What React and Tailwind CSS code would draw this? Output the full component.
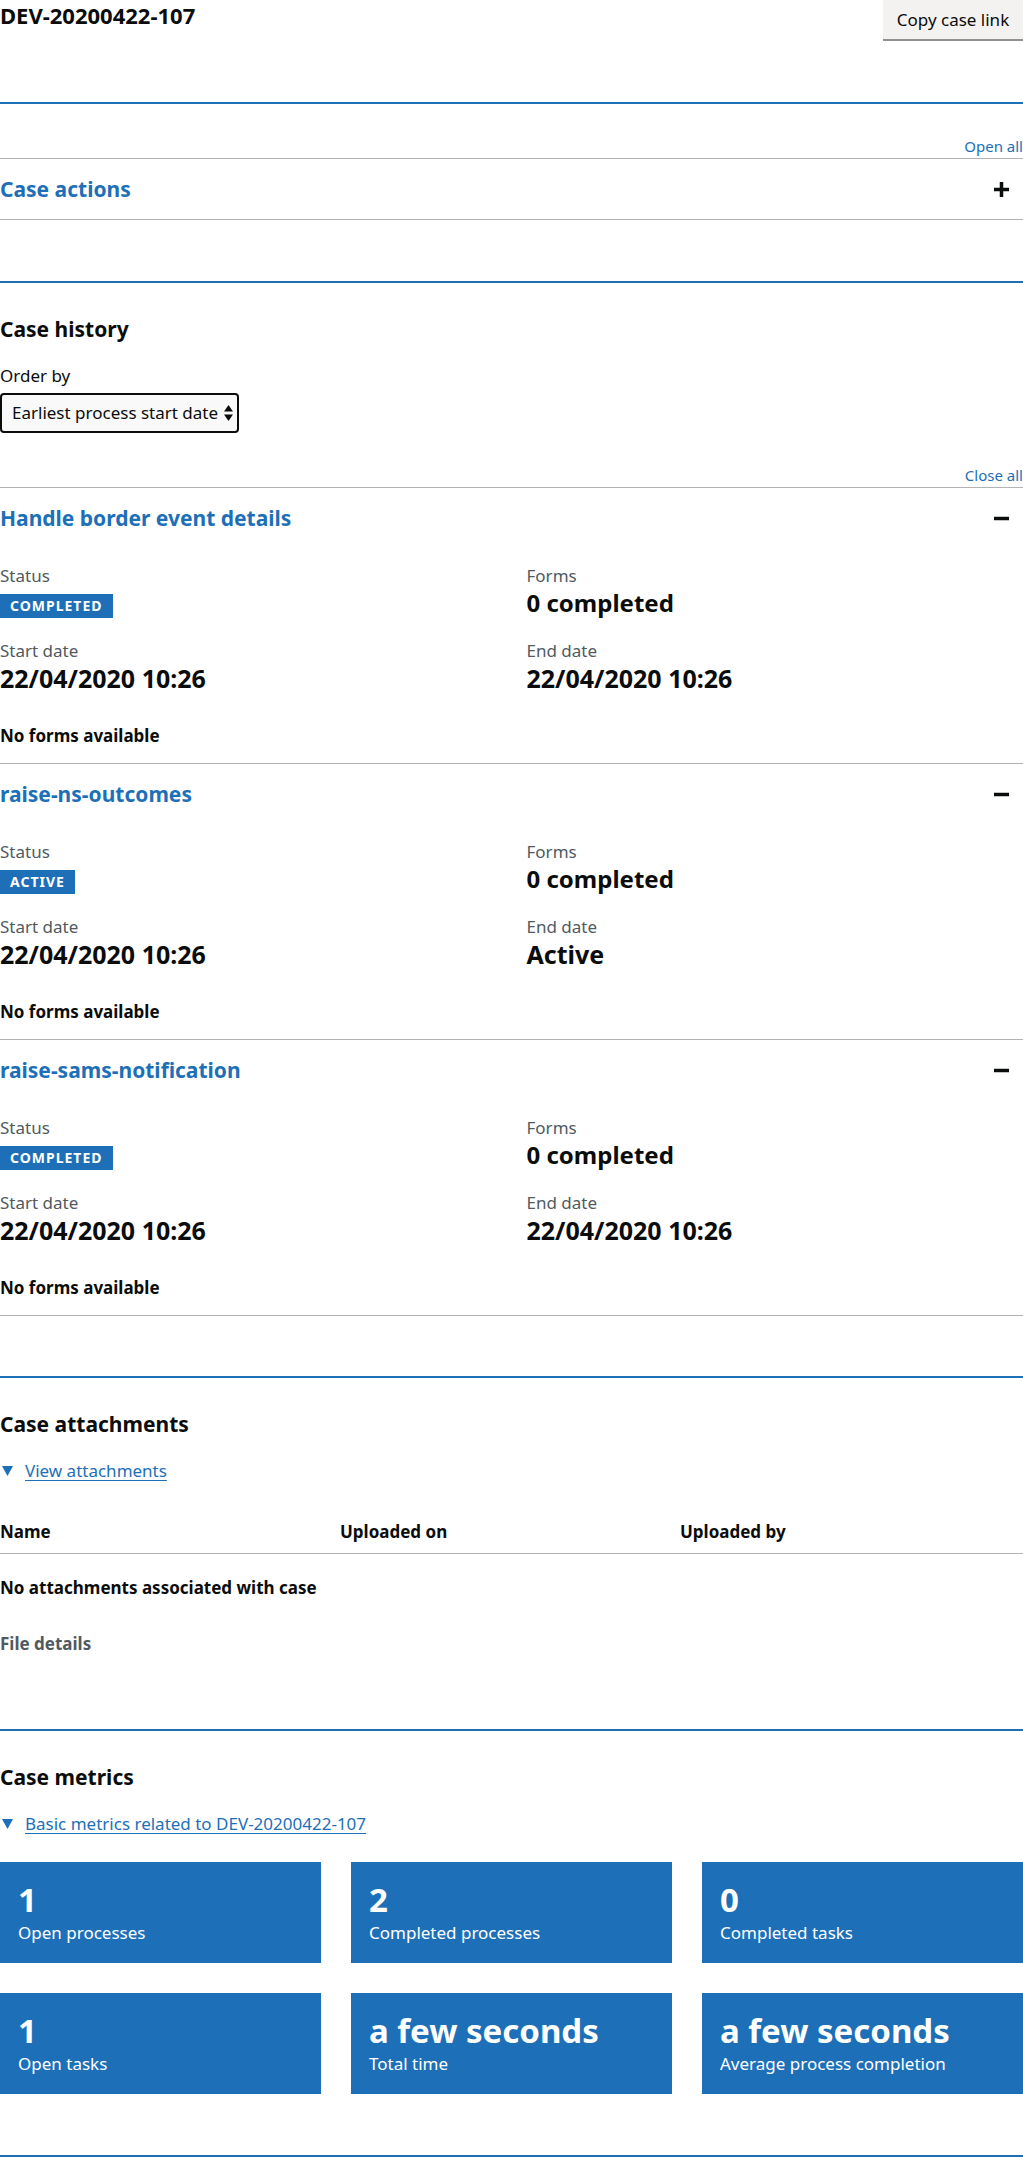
import { useState } from 'react'

const processes = [
  { id: 1, title: 'Handle border event details', status: 'COMPLETED', end: '22/04/2020 10:26' },
  { id: 2, title: 'raise-ns-outcomes', status: 'ACTIVE', end: 'Active' },
  { id: 3, title: 'raise-sams-notification', status: 'COMPLETED', end: '22/04/2020 10:26' },
]

const metrics = [
  { value: '1', label: 'Open processes' },
  { value: '2', label: 'Completed processes' },
  { value: '0', label: 'Completed tasks' },
  { value: '1', label: 'Open tasks' },
  { value: 'a few seconds', label: 'Total time' },
  { value: 'a few seconds', label: 'Average process completion' },
]

function PlusIcon() {
  return (
    <svg width="15" height="15" viewBox="0 0 15 15" aria-hidden="true">
      <path d="M7.5 0v15M0 7.5h15" stroke="#0b0c0c" strokeWidth="3.5" />
    </svg>
  )
}

function MinusIcon() {
  return (
    <svg width="15" height="15" viewBox="0 0 15 15" aria-hidden="true">
      <path d="M0 7.5h15" stroke="#0b0c0c" strokeWidth="3.5" />
    </svg>
  )
}

function DownTriangle() {
  return (
    <svg width="11" height="10" viewBox="0 0 11 10" aria-hidden="true">
      <polygon points="0,0 11,0 5.5,10" fill="#1d70b8" />
    </svg>
  )
}

function SectionBreak() {
  return <div className="h-[2px] bg-[#1d70b8]" />
}

function Process({ title, status, end }) {
  return (
    <section className="border-t border-[#b1b4b6] pb-[15px]">
      <div className="flex items-center justify-between pt-[16px] pr-[14px]">
        <h3 className="text-[21px] font-bold leading-[28px] text-[#1d70b8]">{title}</h3>
        <MinusIcon />
      </div>
      <dl className="mt-[32px] grid grid-cols-2 gap-x-[30px] gap-y-[21px]">
        <div>
          <dt className="text-[17px] leading-[24px] text-[#505a5f]">Status</dt>
          <dd className="h-[30px] pt-[5px]">
            <span className="inline-block h-[24px] bg-[#1d70b8] px-[10px] text-[14px] font-bold leading-[24px] tracking-[1px] text-white">
              {status}
            </span>
          </dd>
        </div>
        <div>
          <dt className="text-[17px] leading-[24px] text-[#505a5f]">Forms</dt>
          <dd className="text-[24px] font-bold leading-[30px]">0 completed</dd>
        </div>
        <div>
          <dt className="text-[17px] leading-[24px] text-[#505a5f]">Start date</dt>
          <dd className="text-[25px] font-bold leading-[30px]">22/04/2020 10:26</dd>
        </div>
        <div>
          <dt className="text-[17px] leading-[24px] text-[#505a5f]">End date</dt>
          <dd className="text-[25px] font-bold leading-[30px]">{end}</dd>
        </div>
      </dl>
      <p className="mt-[31px] text-[17px] font-bold leading-[24px]">No forms available</p>
    </section>
  )
}

export default function App() {
  const [order, setOrder] = useState('earliest')

  return (
    <div className="min-h-screen bg-white font-['Noto_Sans',sans-serif] text-[#0b0c0c]">
      <header className="flex items-start justify-between">
        <h1 className="text-[22px] font-bold leading-[30px]">DEV-20200422-107</h1>
        <button
          type="button"
          className="flex h-[41px] w-[140px] items-center justify-center border-b-2 border-[#929191] bg-[#f3f2f1] text-[17px] leading-[24px]"
        >
          Copy case link
        </button>
      </header>

      <div className="mt-[61px]">
        <SectionBreak />
      </div>

      {/* Case actions accordion, collapsed */}
      <div className="mt-[32px] text-right text-[15px] leading-[20px] text-[#1d70b8]">Open all</div>
      <div className="mt-[2px] flex h-[62px] items-center justify-between border-y border-[#b1b4b6] pr-[14px]">
        <h2 className="text-[21px] font-bold leading-[28px] text-[#1d70b8]">Case actions</h2>
        <PlusIcon />
      </div>

      <div className="mt-[61px]">
        <SectionBreak />
      </div>

      <h2 className="mt-[32px] text-[21px] font-bold leading-[28px]">Case history</h2>
      <label htmlFor="order" className="mt-[21px] block text-[17px] leading-[24px]">
        Order by
      </label>
      <div className="relative mt-[5px] w-[239px]">
        <select
          id="order"
          value={order}
          onChange={(e) => setOrder(e.target.value)}
          className="h-[40px] w-full appearance-none rounded-[4px] border-2 border-[#0b0c0c] bg-[#f9f9f9] pl-[10px] text-[17px] leading-[24px]"
        >
          <option value="earliest">Earliest process start date</option>
          <option value="latest">Latest process start date</option>
        </select>
        <svg
          className="pointer-events-none absolute right-[6px] top-[12px]"
          width="9"
          height="16"
          viewBox="0 0 9 16"
          aria-hidden="true"
        >
          <polygon points="4.5,0 9,6.5 0,6.5" fill="#0b0c0c" />
          <polygon points="0,9.5 9,9.5 4.5,16" fill="#0b0c0c" />
        </svg>
      </div>

      <div className="mt-[32px] text-right text-[15px] leading-[20px] text-[#1d70b8]">Close all</div>
      <div className="mt-[2px] border-b border-[#b1b4b6]">
        {processes.map((p) => (
          <Process key={p.id} title={p.title} status={p.status} end={p.end} />
        ))}
      </div>

      <div className="mt-[60px]">
        <SectionBreak />
      </div>

      <h2 className="mt-[32px] text-[21px] font-bold leading-[28px]">Case attachments</h2>
      <div className="mt-[21px] flex items-center gap-[12px] pl-[2px] text-[17px] leading-[24px]">
        <DownTriangle />
        <span className="text-[#1d70b8] underline underline-offset-[3px]">View attachments</span>
      </div>
      <div className="mt-[37px] grid grid-cols-[340px_340px_1fr] border-b border-[#b1b4b6] pb-[9px] text-[17px] font-bold leading-[24px]">
        <span>Name</span>
        <span>Uploaded on</span>
        <span>Uploaded by</span>
      </div>
      <p className="mt-[22px] text-[17px] font-bold leading-[24px]">No attachments associated with case</p>
      <p className="mt-[32px] text-[17px] font-bold leading-[24px] text-[#505a5f]">File details</p>

      <div className="mt-[73px]">
        <SectionBreak />
      </div>

      <h2 className="mt-[32px] text-[21px] font-bold leading-[28px]">Case metrics</h2>
      <div className="mt-[21px] flex items-center gap-[12px] pl-[2px] text-[17px] leading-[24px]">
        <DownTriangle />
        <span className="text-[#1d70b8] underline underline-offset-[3px]">
          Basic metrics related to DEV-20200422-107
        </span>
      </div>
      <div className="mt-[26px] grid grid-cols-3 gap-x-[30px] gap-y-[30px]">
        {metrics.map((m, i) => (
          <div key={i} className="h-[101px] bg-[#1d70b8] pl-[18px] pt-[20px] text-white">
            <div className="text-[33px] font-bold leading-[36px]">{m.value}</div>
            <div className="mt-[3px] text-[17px] leading-[24px]">{m.label}</div>
          </div>
        ))}
      </div>

      <div className="mt-[61px] pb-[20px]">
        <SectionBreak />
      </div>
    </div>
  )
}
